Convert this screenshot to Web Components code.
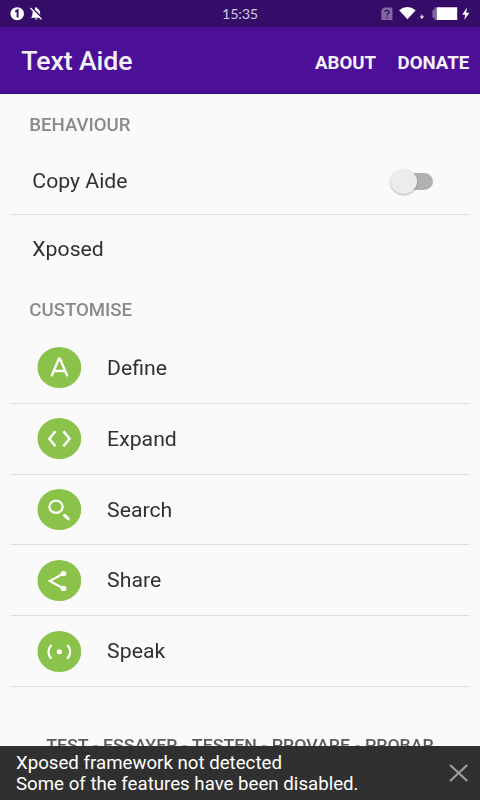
<!DOCTYPE html>
<html lang="en">
<head>
<meta charset="UTF-8">
<title>Text Aide</title>
<style>
    body {
        margin: 0;
        width: 480px;
        height: 800px;
        overflow: hidden;
        background: #fafafa;
        font-family: Roboto, "Noto Sans", sans-serif;
    }
</style>
</head>
<body>
<text-aide-app></text-aide-app>

<script>
class StatusBar extends HTMLElement {
    constructor() {
        super();
        this.attachShadow({ mode: "open" });
    }

    connectedCallback() {
        this.shadowRoot.innerHTML = `
            <style>
                :host {
                    display: grid;
                    grid-template-columns: 1fr auto 1fr;
                    align-items: center;
                    height: 27px;
                    background-color: #350d68;
                    color: #d0c6e0;
                }
                svg {
                    display: block;
                }
                .right {
                    justify-self: end;
                }
                .time {
                    font-family: Lato, sans-serif;
                    font-size: 13.5px;
                    line-height: 26px;
                    letter-spacing: -0.2px;
                }
            </style>
            <svg width="60" height="27" viewBox="0 0 64 27" preserveAspectRatio="none">
                <ellipse cx="17.2" cy="13.7" rx="6.8" ry="6.5" fill="#fff"/>
                <path d="M15.2 11.8 L17.6 10.2 V17.5" fill="none" stroke="#350d68" stroke-width="1.9"/>
                <path d="M31 17.8 Q32.6 16 32.6 12.5 Q32.6 9.4 35 8.8 V7.6 H37.4 V8.8 Q40 9.6 40 13 Q40 16 41.4 17.8 Z M34.5 18.4 H38 L36.2 19.8 Z" fill="#fff"/>
                <path d="M32 7.8 L42.6 18.4" stroke="#350d68" stroke-width="1.5"/>
                <path d="M30.5 8 L41.6 19.4" stroke="#fff" stroke-width="1.3"/>
            </svg>
            <span class="time">15:35</span>
            <svg class="right" width="99.4" height="27" viewBox="374 0 106 27" preserveAspectRatio="none">
                <path d="M383.5 7.5 H392 V20 H381 V10 Z" fill="#81699f"/>
                <path d="M384.4 12 Q384.5 10.4 386.5 10.4 Q388.6 10.4 388.6 12.2 Q388.6 13.2 387.4 14 Q386.5 14.6 386.5 15.6 M386.5 16.8 V18.2" fill="none" stroke="#350d68" stroke-width="1.4"/>
                <path d="M398.7 10.2 Q406.8 3.8 415.3 10.2 L407 19.3 Z" fill="#fff"/>
                <path d="M421.4 14 L423.2 16 H419.6 Z" fill="#8f7aae"/>
                <path d="M419.4 16.2 H423.6 L421.5 19 Z" fill="#fff"/>
                <path d="M432 10 H434 V7.5 H437 V20 H434 V17.5 H432 Z" fill="#81699f"/>
                <path d="M436.5 7.3 H456.8 V20 H436.5 Z" fill="#fff"/>
                <path d="M466.6 7.6 L461.8 14.8 H464.8 L463.8 20 L469 12.8 H465.8 Z" fill="#fff"/>
            </svg>
        `;
    }
}

class AppBar extends HTMLElement {
    constructor() {
        super();
        this.attachShadow({ mode: "open" });
    }

    connectedCallback() {
        this.shadowRoot.innerHTML = `
            <style>
                :host {
                    display: flex;
                    align-items: center;
                    box-sizing: border-box;
                    height: 67px;
                    padding: 3px 10px 0 20px;
                    background-color: #4b1097;
                    border-bottom: 1px solid #3a0c80;
                    color: #f6f2fb;
                }
                h1 {
                    flex: 1;
                    margin: 0;
                    font-size: 25px;
                    font-weight: 500;
                    letter-spacing: -0.1px;
                }
                nav {
                    display: flex;
                    gap: 20px;
                    padding-top: 3px;
                    font-size: 17.5px;
                    font-weight: 700;
                }
            </style>
            <h1><slot></slot></h1>
            <nav><slot name="action"></slot></nav>
        `;
    }
}

class SectionHeader extends HTMLElement {
    constructor() {
        super();
        this.attachShadow({ mode: "open" });
    }

    connectedCallback() {
        this.shadowRoot.innerHTML = `
            <style>
                :host {
                    display: block;
                    height: 54px;
                    padding-left: 27.5px;
                    font-size: 17.5px;
                    font-weight: 500;
                    line-height: 63px;
                    letter-spacing: -0.05px;
                    color: #8a8a8a;
                }
            </style>
            <slot></slot>
        `;
    }
}

class ListRow extends HTMLElement {
    constructor() {
        super();
        this.attachShadow({ mode: "open" });
    }

    connectedCallback() {
        this.shadowRoot.innerHTML = `
            <style>
                :host {
                    display: flex;
                    align-items: center;
                    box-sizing: border-box;
                    height: 67px;
                    margin: 0 10.3px;
                    padding: 0 33.5px 0 20px;
                    border-bottom: 1px solid #dedede;
                    font-size: 19.9px;
                    color: #303030;
                }
                :host([last]) {
                    height: 64px;
                    padding-top: 5px;
                    border-bottom-color: transparent;
                }
                :host([tool]) {
                    height: 70.8px;
                    padding: 0 0 0 24.7px;
                }
                :host([tool]) .label {
                    padding-top: 1.4px;
                }
                .label {
                    flex: 1;
                }
            </style>
            <slot name="icon"></slot>
            <span class="label"><slot></slot></span>
            <slot name="control"></slot>
        `;
    }
}

class ToolIcon extends HTMLElement {
    constructor() {
        super();
        this.attachShadow({ mode: "open" });
    }

    connectedCallback() {
        // all glyphs are drawn on a 44 x 41 box
        const glyphs = {
            define: '<path d="M14.1 29.3 L21.6 11.6 H22.6 L30.1 29.3 M16.7 24 H27.6" stroke-width="2.4"/>',
            expand: '<path d="M18.1 13.3 L12 20.8 L18.1 28.2 M26.1 13.3 L32.2 20.8 L26.1 28.2" stroke-width="2.5"/>',
            search: '<ellipse cx="18.7" cy="17.8" rx="6.6" ry="6.1"/><path d="M27.2 26.3 L31 29.8" stroke-width="3" stroke-linecap="round"/>',
            share: '<path d="M26 13.6 L12.5 21 L26 28.5" stroke-width="2.2"/><g fill="#fff" stroke="none"><ellipse cx="26.2" cy="13.6" rx="2.8" ry="2.7"/><ellipse cx="26.2" cy="28.4" rx="2.8" ry="2.7"/></g>',
            speak: '<path d="M14 13.9 Q8.3 20.8 14 27.8 M30 13.9 Q35.7 20.8 30 27.8"/><ellipse cx="22" cy="20.8" rx="2.7" ry="2.5" fill="#fff" stroke="none"/>'
        };

        this.shadowRoot.innerHTML = `
            <style>
                :host {
                    display: block;
                    width: 41.25px;
                    height: 41px;
                    margin-right: 24.2px;
                }
                svg {
                    display: block;
                    width: 100%;
                    height: 100%;
                }
            </style>
            <svg viewBox="0 0 44 41" preserveAspectRatio="none">
                <ellipse cx="22" cy="20.5" rx="22" ry="20.5" fill="#8bc34a"/>
                <g fill="none" stroke="#fff" stroke-width="2.2">${glyphs[this.getAttribute("name")]}</g>
            </svg>
        `;
    }
}

class ToggleSwitch extends HTMLElement {
    constructor() {
        super();
        this.attachShadow({ mode: "open" });
    }

    connectedCallback() {
        this.shadowRoot.innerHTML = `
            <style>
                :host {
                    display: flex;
                    align-items: center;
                    width: 40px;
                    height: 26px;
                }
                .thumb {
                    flex: none;
                    z-index: 1;
                    width: 25px;
                    height: 25px;
                    border-radius: 50%;
                    background-color: #ececec;
                    box-shadow: 0 1px 2px rgba(0, 0, 0, 0.3);
                }
                .track {
                    flex: none;
                    width: 29px;
                    height: 17px;
                    margin-left: -14px;
                    border-radius: 9px;
                    background-color: #b0b0b0;
                }
            </style>
            <div class="thumb"></div>
            <div class="track"></div>
        `;
    }
}

class SnackBar extends HTMLElement {
    constructor() {
        super();
        this.attachShadow({ mode: "open" });
    }

    connectedCallback() {
        this.shadowRoot.innerHTML = `
            <style>
                :host {
                    display: flex;
                    align-items: center;
                    justify-content: space-between;
                    box-sizing: border-box;
                    height: 54px;
                    padding: 0 11.2px 0 15px;
                    background-color: #303030;
                    color: #fff;
                    font-size: 17.5px;
                    line-height: 21px;
                }
                .message {
                    padding-top: 1px;
                }
            </style>
            <div class="message"><slot></slot></div>
            <svg width="18" height="18" viewBox="0 0 18 18">
                <path d="M1 1 L17 17 M17 1 L1 17" stroke="#a0a0a0" stroke-width="1.9"/>
            </svg>
        `;
    }
}

class TextAideApp extends HTMLElement {
    constructor() {
        super();
        this.attachShadow({ mode: "open" });
    }

    connectedCallback() {
        // 450px wide layout stretched to the full 480px
        this.shadowRoot.innerHTML = `
            <style>
                :host {
                    display: flex;
                    flex-direction: column;
                    width: 450px;
                    height: 800px;
                    overflow: hidden;
                    transform: scaleX(1.06667);
                    transform-origin: 0 0;
                }
                status-bar, app-bar, snack-bar {
                    flex: none;
                }
                main {
                    flex: 1;
                    min-height: 0;
                    overflow: hidden;
                }
                .languages {
                    margin: 42px 0 0;
                    text-align: center;
                    font-size: 16.65px;
                    font-weight: 500;
                    line-height: 34px;
                    white-space: nowrap;
                    color: #5c5c5c;
                }
            </style>
            <status-bar></status-bar>
            <app-bar>
                Text Aide
                <span slot="action">ABOUT</span>
                <span slot="action">DONATE</span>
            </app-bar>
            <main>
                <section-header>BEHAVIOUR</section-header>
                <list-row>Copy Aide<toggle-switch slot="control"></toggle-switch></list-row>
                <list-row last>Xposed</list-row>
                <section-header>CUSTOMISE</section-header>
                <list-row tool><tool-icon slot="icon" name="define"></tool-icon>Define</list-row>
                <list-row tool><tool-icon slot="icon" name="expand"></tool-icon>Expand</list-row>
                <list-row tool><tool-icon slot="icon" name="search"></tool-icon>Search</list-row>
                <list-row tool><tool-icon slot="icon" name="share"></tool-icon>Share</list-row>
                <list-row tool><tool-icon slot="icon" name="speak"></tool-icon>Speak</list-row>
                <p class="languages">TEST - ESSAYER - TESTEN - PROVARE - PROBAR</p>
            </main>
            <snack-bar>Xposed framework not detected<br>Some of the features have been disabled.</snack-bar>
        `;
    }
}

customElements.define("status-bar", StatusBar);
customElements.define("app-bar", AppBar);
customElements.define("section-header", SectionHeader);
customElements.define("list-row", ListRow);
customElements.define("tool-icon", ToolIcon);
customElements.define("toggle-switch", ToggleSwitch);
customElements.define("snack-bar", SnackBar);
customElements.define("text-aide-app", TextAideApp);
</script>
</body>
</html>
